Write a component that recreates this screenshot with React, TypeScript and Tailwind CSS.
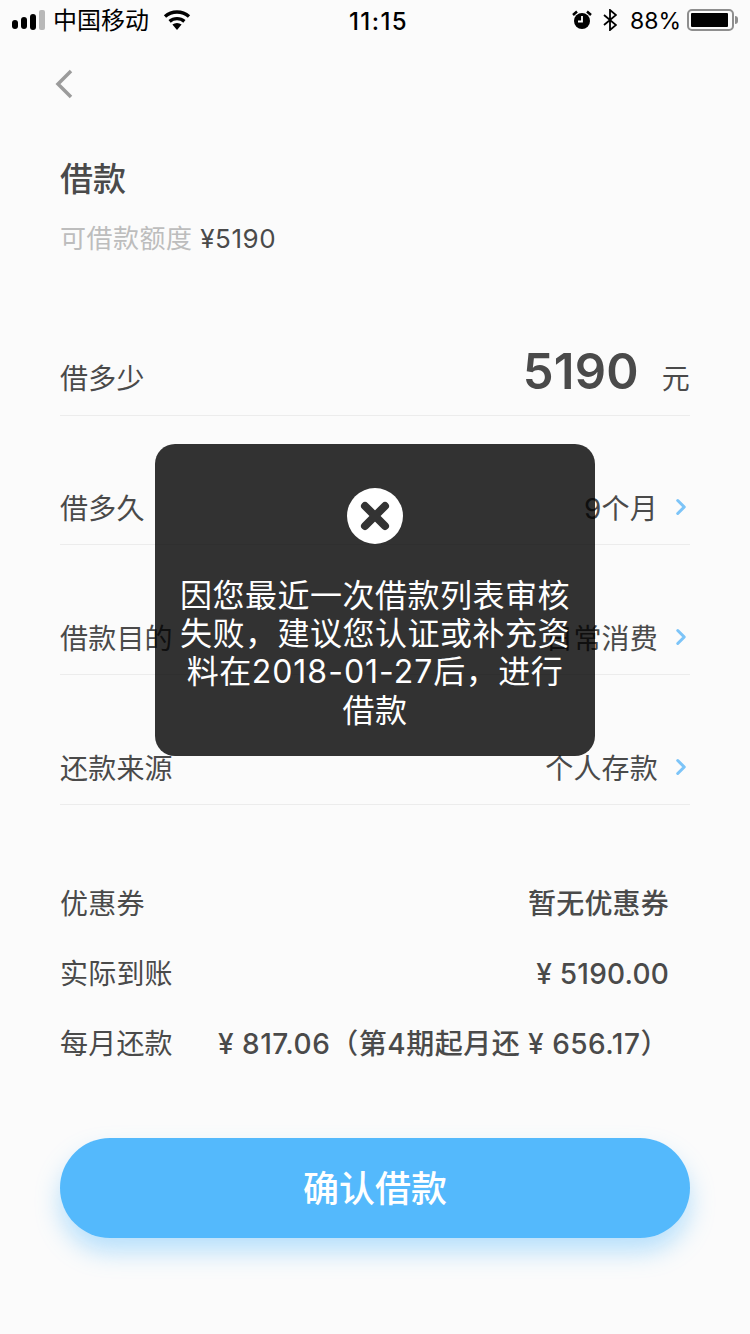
import type { ReactNode } from 'react';
import { ChevronRight } from 'lucide-react';

const font = 'font-["Inter","Noto_Sans_CJK_SC",sans-serif]';

function StatusBar() {
  return (
    <div className="relative flex h-10 items-center justify-between pl-3 pr-[12px] text-black">
      <div className="flex items-center">
        <div className="flex items-center gap-[3px]">
          <span className="mt-[9px] h-[9px] w-[6px] rounded-[3px] bg-black" />
          <span className="mt-[6px] h-[12px] w-[6px] rounded-[3px] bg-black" />
          <span className="mt-[3px] h-[16px] w-[6px] rounded-[3px] bg-black" />
          <span className="h-[20px] w-[6px] rounded-[2px] bg-[#b8b8b8]" />
        </div>
        <span className="ml-[8px] mt-[2px] text-[24px] leading-none">中国移动</span>
        <svg className="ml-[14px]" width="28" height="20" viewBox="0 0 28 20">
          <path d="M14 20l-4.6-5.4a7 7 0 0 1 9.2 0z" fill="#000" />
          <path d="M6.6 11.4a11.3 11.3 0 0 1 14.8 0" fill="none" stroke="#000" strokeWidth="3.4" />
          <path d="M2 6.6a18 18 0 0 1 24 0" fill="none" stroke="#000" strokeWidth="3.4" />
        </svg>
      </div>
      <span className="absolute left-[349px] top-[9px] text-[24px] font-medium leading-[26px] tracking-[1.4px]">11:15</span>
      <div className="flex items-center">
        <svg width="20" height="20" viewBox="0 0 20 20">
          <circle cx="10" cy="11" r="8" fill="#000" />
          <path d="M10 6v5.5H6" fill="none" stroke="#fff" strokeWidth="1.8" />
          <path d="M1 5l4-3.5M19 5l-4-3.5" stroke="#000" strokeWidth="2.5" />
        </svg>
        <svg className="ml-[11px]" width="14" height="22" viewBox="0 0 14 22">
          <path d="M1 6l12 10-6 5V1l6 5L1 16" fill="none" stroke="#000" strokeWidth="1.8" />
        </svg>
        <span className="ml-[13px] mt-[2px] text-[23px] leading-none">88%</span>
        <div className="ml-[6px] h-[22px] w-[47px] rounded-[5px] border-2 border-[#8e8e8e] p-[2px]">
          <div className="h-full w-[37px] rounded-[1px] bg-black" />
        </div>
        <span className="ml-[1px] h-[8px] w-[3px] rounded-r-full bg-[#8e8e8e]" />
      </div>
    </div>
  );
}

function PickRow({ label, value, short = false }: { label: string; value: string; short?: boolean }) {
  return (
    <div className={`flex items-center justify-between border-b border-[#ececec] pt-[58px] text-[28px] tracking-[0.2px] text-[#4a4a4a] ${short ? 'h-[129px]' : 'h-[130px]'}`}>
      <span>{label}</span>
      <div className="-mr-[4px] flex items-center">
        <span>{value}</span>
        <ChevronRight className="mb-[4px] ml-[10px] text-[#7cc4f8]" size={26} strokeWidth={2.8} />
      </div>
    </div>
  );
}

function InfoRow({ label, value }: { label: string; value: ReactNode }) {
  return (
    <div className="flex h-[70px] items-center justify-between pr-[21px] text-[28px] tracking-[0.2px] text-[#4a4a4a]">
      <span>{label}</span>
      <span className="font-medium">{value}</span>
    </div>
  );
}

export default function App() {
  return (
    <div className={`relative h-[1334px] w-[750px] overflow-hidden bg-[#fbfbfb] ${font}`}>
      <StatusBar />

      <div className="px-[60px]">
        <svg className="mt-[28px] -ml-[7px]" width="24" height="32" viewBox="0 0 24 32">
          <path d="M18 3L5 16l13 13" fill="none" stroke="#9b9b9b" strokeWidth="3.5" />
        </svg>

        <h1 className="mt-[57px] text-[33px] font-medium leading-[44px] text-[#4a4a4a]">借款</h1>
        <p className="mt-[20px] text-[26px] leading-[36px] tracking-[0.5px] text-[#bdbdbd]">
          可借款额度 <span className="text-[#4a4a4a]">¥5190</span>
        </p>

        <div className="mt-[29px] flex h-[130px] items-baseline justify-between border-b border-[#ececec] pt-[49px] text-[28px] tracking-[0.2px] text-[#4a4a4a]">
          <span>借多少</span>
          <div className="flex items-baseline">
            <span className="text-[49px] font-semibold">5190</span>
            <span className="ml-[23px]">元</span>
          </div>
        </div>
        <PickRow label="借多久" value="9个月" short />
        <PickRow label="借款目的" value="日常消费" />
        <PickRow label="还款来源" value="个人存款" />

        <div className="mt-[64px]">
          <InfoRow label="优惠券" value="暂无优惠券" />
          <InfoRow label="实际到账" value="¥ 5190.00" />
          <InfoRow
            label="每月还款"
            value={<span className="tracking-[0.5px]">¥ 817.06（第4期起月还 ¥ 656.17）</span>}
          />
        </div>

        <button className="mt-[59px] h-[100px] w-full rounded-full bg-[#54b9fc] pt-[2px] text-[36px] font-medium text-white shadow-[0_14px_24px_rgba(84,185,252,0.4)]">
          确认借款
        </button>
      </div>

      <div className="absolute left-[155px] top-[444px] flex h-[312px] w-[440px] flex-col items-center rounded-[20px] bg-black/80 px-[24px] pt-[44px]">
        <div className="flex h-[56px] w-[56px] items-center justify-center rounded-full bg-white">
          <svg width="30" height="30" viewBox="0 0 30 30">
            <path d="M5 5l20 20M25 5L5 25" stroke="#333" strokeWidth="8" strokeLinecap="round" />
          </svg>
        </div>
        <p className="mt-[33px] text-center text-[32px] leading-[38.2px] tracking-[0.5px] text-white">
          因您最近一次借款列表审核失败，建议您认证或补充资料在<span className="tracking-[1px]">2018-01-27</span>后，进行借款
        </p>
      </div>
    </div>
  );
}
